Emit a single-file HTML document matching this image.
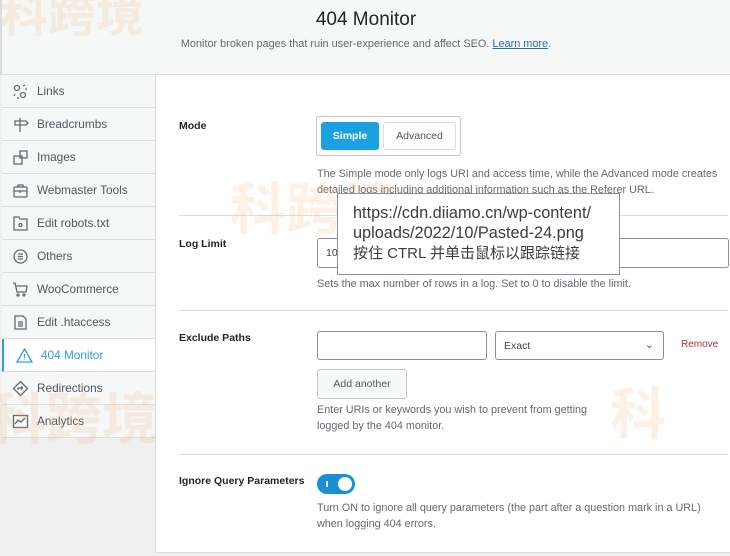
<!DOCTYPE html>
<html><head><meta charset="utf-8"><style>
*{box-sizing:border-box;margin:0;padding:0}
body{width:730px;height:556px;overflow:hidden;background:#f0f0f1;font-family:"Liberation Sans","Noto Sans CJK SC",sans-serif;color:#1d2327;position:relative}
.hdr{position:absolute;left:0;top:0;width:730px;height:75px;background:#f6f7f7;border-bottom:1px solid #dcdcde;border-left:2px solid #dcdcde}
.hdr h1{position:absolute;top:9px;width:100%;text-align:center;font-size:19px;font-weight:normal;color:#1d2327}
.hdr p{position:absolute;top:38px;width:100%;text-align:center;font-size:10.9px;color:#646970}
.hdr a{color:#2271b1;text-decoration:underline}
.side{position:absolute;left:2px;top:75px;width:154px}
.it{height:33px;border-bottom:1px solid #dcdcde;border-right:1px solid #dcdcde;background:#f6f7f7;display:flex;align-items:center;padding-left:10px;font-size:11.8px;color:#50575e}
.it svg{width:17px;height:17px;margin-right:8px;stroke:#646970;fill:none;stroke-width:1.3}
.it.act{background:#fff;border-left:2px solid #2d9fd9;border-right:none;color:#2d9fd9;padding-left:12px}
.it.act svg{stroke:#2d9fd9}
.main{position:absolute;left:155px;top:75px;width:575px;height:478px;background:#fff;border-left:1px solid #dcdcde;border-bottom:1px solid #dcdcde}
.lbl{position:absolute;left:23px;font-size:10.5px;font-weight:bold;color:#1d2327}
.help{position:absolute;left:161px;font-size:10.8px;color:#646970;line-height:16px;white-space:nowrap}
.sep{position:absolute;left:23px;right:2px;height:1px;background:#dcdcde}
.inp{position:absolute;border:1px solid #8c8f94;border-radius:3px;background:#fff;font-size:10.5px;color:#3c434a;padding-left:8px;display:flex;align-items:center}
.wm{position:absolute;color:rgba(245,180,110,.18);font-weight:bold;font-family:"Noto Sans CJK SC",sans-serif}
</style></head><body>
<div class="hdr"><h1>404 Monitor</h1><p>Monitor broken pages that ruin user-experience and affect SEO. <a>Learn more</a>.</p></div>
<div class="side">
<div class="it"><svg viewBox="0 0 17 17"><circle cx="5" cy="5" r="2.5"/><circle cx="11" cy="12" r="2.5"/><path d="M11 3l2-1M13 6l2 0M3 11l-1 2M6 14l0 2"/></svg>Links</div>
<div class="it"><svg viewBox="0 0 17 17"><path d="M8 2v14M3 5h11l2 2-2 2H3z"/></svg>Breadcrumbs</div>
<div class="it"><svg viewBox="0 0 17 17"><rect x="2" y="7" width="8" height="8"/><rect x="8" y="2" width="7" height="7"/></svg>Images</div>
<div class="it"><svg viewBox="0 0 17 17"><rect x="2" y="5" width="13" height="10" rx="1"/><path d="M6 5V3h5v2M2 9h13M8 8v3"/></svg>Webmaster Tools</div>
<div class="it"><svg viewBox="0 0 17 17"><path d="M2 2h5l1 2h7v11H2z"/><circle cx="8.5" cy="10" r="1.5"/></svg>Edit robots.txt</div>
<div class="it"><svg viewBox="0 0 17 17"><circle cx="8.5" cy="8.5" r="6.5"/><path d="M6 6h5M6 8.5h5M6 11h5"/></svg>Others</div>
<div class="it"><svg viewBox="0 0 17 17"><path d="M1 2h2l2 9h9l1-6H4"/><circle cx="6" cy="14" r="1"/><circle cx="12" cy="14" r="1"/></svg>WooCommerce</div>
<div class="it"><svg viewBox="0 0 17 17"><path d="M3 2h8l3 3v10H3z"/><path d="M6 8h5M6 10h5M6 12h5"/></svg>Edit .htaccess</div>
<div class="it act"><svg viewBox="0 0 17 17"><path d="M8.5 2L16 15H1z"/><path d="M8.5 7v4M8.5 12.5v.5"/></svg>404 Monitor</div>
<div class="it"><svg viewBox="0 0 17 17"><path d="M8.5 1.5l7 7-7 7-7-7z"/><path d="M6 10V8h4M9 6.5l1.5 1.5L9 9.5"/></svg>Redirections</div>
<div class="it"><svg viewBox="0 0 17 17"><rect x="1.5" y="2.5" width="14" height="12"/><path d="M3 11l3-4 3 2 4-4"/></svg>Analytics</div>
</div>
<div class="main">
<div class="lbl" style="top:45px">Mode</div>
<div style="position:absolute;left:160px;top:41px;width:145px;height:40px;border:1px solid #c3c4c7;border-radius:3px"></div>
<div style="position:absolute;left:165px;top:47px;width:58px;height:28px;background:#1aa1e0;border-radius:3px;color:#fff;font-size:10.5px;font-weight:bold;display:flex;align-items:center;justify-content:center">Simple</div>
<div style="position:absolute;left:227px;top:47px;width:73px;height:28px;border:1px solid #dcdcde;border-radius:3px;color:#50575e;font-size:10.5px;display:flex;align-items:center;justify-content:center">Advanced</div>
<div class="help" style="top:91px">The Simple mode only logs URI and access time, while the Advanced mode creates<br>detailed logs including additional information such as the Referer URL.</div>
<div class="sep" style="top:140px"></div>
<div class="lbl" style="top:163px">Log Limit</div>
<div class="inp" style="left:161px;top:163px;width:412px;height:30px">100</div>
<div class="help" style="top:201px">Sets the max number of rows in a log. Set to 0 to disable the limit.</div>
<div class="sep" style="top:235px"></div>
<div class="lbl" style="top:257px">Exclude Paths</div>
<div class="inp" style="left:161px;top:256px;width:170px;height:29px"></div>
<div class="inp" style="left:339px;top:256px;width:169px;height:29px">Exact<span style="position:absolute;right:9px;top:6px;font-size:11px;color:#50575e">&#x2304;</span></div>
<div style="position:absolute;left:525px;top:264px;font-size:10px;color:#b32d2e">Remove</div>
<div style="position:absolute;left:161px;top:294px;width:90px;height:30px;border:1px solid #c3c4c7;border-radius:3px;background:#f6f7f7;color:#50575e;font-size:10.5px;display:flex;align-items:center;justify-content:center">Add another</div>
<div class="help" style="top:327px">Enter URIs or keywords you wish to prevent from getting<br>logged by the 404 monitor.</div>
<div class="sep" style="top:379px"></div>
<div class="lbl" style="top:400px">Ignore Query Parameters</div>
<div style="position:absolute;left:161px;top:399px;width:38px;height:20px;background:#1a8fd6;border-radius:10px"><div style="position:absolute;left:9px;top:7px;width:2px;height:6px;background:#fff"></div><div style="position:absolute;right:3px;top:3px;width:14px;height:14px;border-radius:50%;background:#fff"></div></div>
<div class="help" style="top:425px">Turn ON to ignore all query parameters (the part after a question mark in a URL)<br>when logging 404 errors.</div>
</div>
<div class="wm" style="left:0;top:-25px;font-size:48px">科跨境</div>
<div class="wm" style="left:230px;top:165px;font-size:56px">科跨境</div>
<div class="wm" style="left:-10px;top:375px;font-size:56px">科跨境</div>
<div class="wm" style="left:610px;top:370px;font-size:56px">科</div>
<div style="position:absolute;left:337px;top:193px;width:283px;height:82px;background:#fff;border:1px solid #8c8f94;padding:9px 0 0 15px;font-size:16.3px;line-height:20px;color:#3c3c3c;white-space:nowrap;font-family:'Liberation Sans','Noto Sans CJK SC',sans-serif">https://cdn.diiamo.cn/wp-content/<br>uploads/2022/10/Pasted-24.png<br><span style="font-size:15px">按住 CTRL 并单击鼠标以跟踪链接</span></div>
</body></html>
